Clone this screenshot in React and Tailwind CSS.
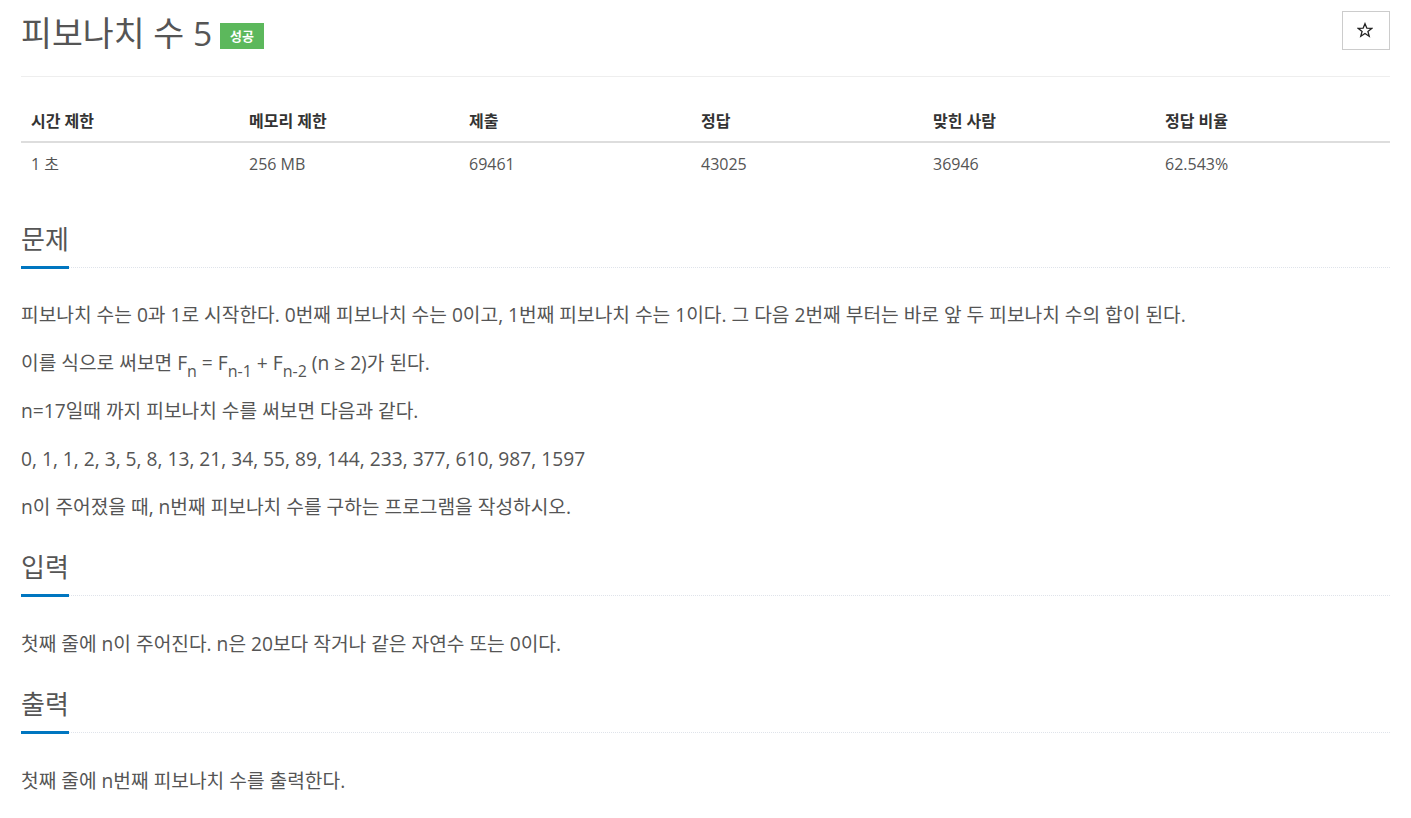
import React from "react";

const font = { fontFamily: '"Open Sans", "Noto Sans CJK KR", sans-serif' };

function Headline({ children }) {
  return (
    <div className="flex items-end">
      <h2 className="text-[26px] leading-[34px] text-[#555] pb-[10px] border-b-[3px] border-[#0076c0]">
        {children}
      </h2>
      <div className="flex-1 mb-[1px] border-b border-dotted border-[#dfe3ea]" />
    </div>
  );
}

function Sub({ children }) {
  return <sub className="text-[16px] align-[-3px]">{children}</sub>;
}

function StarIcon() {
  return (
    <svg width="16" height="16" viewBox="0 0 24 24" className="block">
      <polygon
        points="12,2.5 14.8,9.2 22,9.6 16.4,14.2 18.3,21.3 12,17.3 5.7,21.3 7.6,14.2 2,9.6 9.2,9.2"
        fill="none"
        stroke="#222"
        strokeWidth="2"
        strokeLinejoin="miter"
      />
    </svg>
  );
}

export default function App() {
  const cols = [
    ["시간 제한", "1 초", "w-[218px]"],
    ["메모리 제한", "256 MB", "w-[220px]"],
    ["제출", "69461", "w-[232px]"],
    ["정답", "43025", "w-[232px]"],
    ["맞힌 사람", "36946", "w-[232px]"],
    ["정답 비율", "62.543%", ""],
  ];

  return (
    <div className="bg-white min-h-screen px-[21px] pt-[11px] text-[#555]" style={font}>
      {/* TITLE */}
      <div className="flex justify-between items-start pb-[25px] border-b border-[#eee]">
        <div className="flex items-center gap-[8px] pt-[4px]">
          <h1 className="text-[33.6px] leading-[36px] text-[#555]">피보나치 수 5</h1>
          <span className="bg-[#5cb85c] text-white text-[13px] font-bold px-[10px] h-[26px] leading-[26px] mt-[6px]">
            성공
          </span>
        </div>
        <button className="w-[48px] h-[39px] border border-[#ccc] bg-white flex items-center justify-center">
          <span className="-ml-[2px] -mt-[2px]">
            <StarIcon />
          </span>
        </button>
      </div>

      {/* LIMITS TABLE */}
      <table className="w-full mt-[27px] text-[16px] border-collapse">
        <thead>
          <tr className="border-b-2 border-[#ddd]">
            {cols.map(([h, , w]) => (
              <th key={h} className={`${w} text-left font-bold text-[#333] px-[10px] pt-[7px] pb-[10px] leading-[20px]`}>
                {h}
              </th>
            ))}
          </tr>
        </thead>
        <tbody>
          <tr>
            {cols.map(([h, v]) => (
              <td key={h} className="text-left text-[#555] px-[10px] pt-[11px] pb-[8px] leading-[20px]">
                {v}
              </td>
            ))}
          </tr>
        </tbody>
      </table>

      {/* 문제 */}
      <div className="mt-[40px]">
        <Headline>문제</Headline>
        <div className="pt-[32px] text-[19.2px] leading-[28px]">
          <p className="mb-[20px]">
            피보나치 수는 0과 1로 시작한다. 0번째 피보나치 수는 0이고, 1번째 피보나치 수는 1이다. 그 다음 2번째 부터는 바로 앞 두 피보나치 수의 합이 된다.
          </p>
          <p className="mb-[20px]">
            이를 식으로 써보면 F<Sub>n</Sub> = F<Sub>n-1</Sub> + F<Sub>n-2</Sub> (n ≥ 2)가 된다.
          </p>
          <p className="mb-[20px]">n=17일때 까지 피보나치 수를 써보면 다음과 같다.</p>
          <p className="mb-[20px]">0, 1, 1, 2, 3, 5, 8, 13, 21, 34, 55, 89, 144, 233, 377, 610, 987, 1597</p>
          <p className="mb-[20px]">n이 주어졌을 때, n번째 피보나치 수를 구하는 프로그램을 작성하시오.</p>
        </div>
      </div>

      {/* 입력 */}
      <div className="mt-[29px]">
        <Headline>입력</Headline>
        <div className="pt-[33px] text-[19.2px] leading-[28px]">
          <p className="mb-[20px]">첫째 줄에 n이 주어진다. n은 20보다 작거나 같은 자연수 또는 0이다.</p>
        </div>
      </div>

      {/* 출력 */}
      <div className="mt-[29px]">
        <Headline>출력</Headline>
        <div className="pt-[33px] text-[19.2px] leading-[28px]">
          <p className="mb-[20px]">첫째 줄에 n번째 피보나치 수를 출력한다.</p>
        </div>
      </div>
    </div>
  );
}
